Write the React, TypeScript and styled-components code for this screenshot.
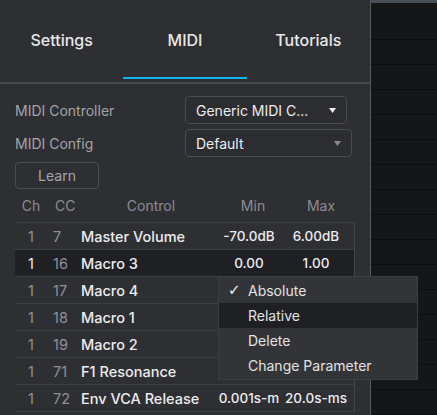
import React from "react";
import styled, { createGlobalStyle } from "styled-components";

const Global = createGlobalStyle`
  html, body { margin: 0; padding: 0; background: #2e2f33; }
  body { font-family: Inter, "Noto Sans", sans-serif; -webkit-font-smoothing: antialiased; }
  * { box-sizing: border-box; }
`;

const Shell = styled.div`
  position: relative;
  display: flex;
  width: 437px;
  height: 415px;
  overflow: hidden;
`;

const Panel = styled.div`
  width: 370px;
  flex: none;
  background: #2e2f33;
  display: flex;
  flex-direction: column;
`;

const Lane = styled.div`
  flex: 1;
  border-left: 1px solid #545a61;
  border-top: 3px solid #4a5057;
  background-color: #151618;
  background-image: repeating-linear-gradient(
    to bottom,
    transparent 0 24px,
    #0c0d0e 24px 25px
  );
  background-position: 0 12px;
`;

const TabBar = styled.div`
  display: grid;
  grid-template-columns: repeat(3, 1fr);
  height: 84px;
  border-bottom: 2px solid #48494d;
`;

const Tab = styled.div<{ $active?: boolean }>`
  position: relative;
  display: flex;
  align-items: center;
  justify-content: center;
  padding-bottom: 2px;
  font-size: 16px;
  font-weight: 500;
  color: #e8e8ea;
  &::after {
    content: "";
    display: ${(p) => (p.$active ? "block" : "none")};
    position: absolute;
    left: 0;
    right: 0;
    bottom: 3px;
    height: 2px;
    background: #12b5ef;
  }
`;

const Form = styled.div`
  display: grid;
  grid-template-columns: 170px auto;
  row-gap: 5px;
  padding: 12px 0 0 15px;
  align-items: center;
`;

const Label = styled.div`
  font-size: 14px;
  color: #a3a4a8;
`;

const Select = styled.div<{ $width: number; $dim?: boolean }>`
  width: ${(p) => p.$width}px;
  height: 28px;
  border: 1px solid #4b4c50;
  border-radius: 4px;
  background: #2c2d31;
  display: flex;
  align-items: center;
  justify-content: space-between;
  padding: 0 10px 0 10px;
  font-size: 14px;
  color: #ececee;
  svg { fill: ${(p) => (p.$dim ? "#8a8b8f" : "#f0f0f0")}; }
`;

const LearnButton = styled.div`
  width: 84px;
  height: 27px;
  border: 1px solid #4b4c50;
  border-radius: 4px;
  display: flex;
  align-items: center;
  justify-content: center;
  font-size: 14px;
  color: #a5a6aa;
`;

const cols = "32px 34px 140px 56px 78px";

const Head = styled.div`
  display: grid;
  grid-template-columns: ${cols};
  height: 33px;
  margin: 0 15px;
  align-items: center;
  font-size: 14px;
  color: #8b8d92;
`;

const HeadCell = styled.div<{ $align?: string; $shift?: number }>`
  text-align: ${(p) => p.$align || "center"};
  padding-left: ${(p) => p.$shift || 0}px;
  white-space: nowrap;
`;

const Table = styled.div`
  margin: 0 15px;
  border-top: 1px solid #3d3e42;
  border-right: 1px solid #45464a;
`;

const Row = styled.div<{ $selected?: boolean }>`
  display: grid;
  grid-template-columns: ${cols};
  height: 27px;
  align-items: center;
  border-bottom: 1px solid #3d3e42;
  background: ${(p) => (p.$selected ? "#1f2024" : "transparent")};
  font-size: 14.5px;
`;

const Num = styled.div<{ $bright?: boolean; $left?: boolean }>`
  color: ${(p) => (p.$bright ? "#ececee" : "#909297")};
  text-align: ${(p) => (p.$left ? "left" : "center")};
  padding-left: ${(p) => (p.$left ? "6px" : "0")};
`;

const Name = styled.div`
  color: #ececee;
  font-weight: 500;
  white-space: nowrap;
`;

const Value = styled.div`
  color: #ececee;
  font-weight: 500;
  font-size: 13.5px;
  display: flex;
  justify-content: center;
  white-space: nowrap;
`;

const Menu = styled.div`
  position: absolute;
  left: 218px;
  top: 276px;
  width: 200px;
  padding: 1px 0 1px;
  background: #333438;
  border: 1px solid #3c3d41;
`;

const Item = styled.div<{ $hover?: boolean }>`
  position: relative;
  height: 25px;
  display: flex;
  align-items: center;
  padding-left: 29px;
  font-size: 14px;
  color: #e2e2e4;
  background: ${(p) => (p.$hover ? "#1f2023" : "transparent")};
`;

const Check = styled.span`
  position: absolute;
  left: 9px;
  top: 3px;
  font-family: "DejaVu Sans", sans-serif;
  font-size: 15px;
  color: #f0f0f0;
`;

const Caret = () => (
  <svg width="7" height="5" viewBox="0 0 7 5">
    <path d="M0 0h7L3.5 5z" />
  </svg>
);

type Mapping = {
  ch: number;
  cc: number;
  name: string;
  min?: string;
  max?: string;
  selected?: boolean;
};

const rows: Mapping[] = [
  { ch: 1, cc: 7, name: "Master Volume", min: "-70.0dB", max: "6.00dB" },
  { ch: 1, cc: 16, name: "Macro 3", min: "0.00", max: "1.00", selected: true },
  { ch: 1, cc: 17, name: "Macro 4" },
  { ch: 1, cc: 18, name: "Macro 1" },
  { ch: 1, cc: 19, name: "Macro 2" },
  { ch: 1, cc: 71, name: "F1 Resonance" },
  { ch: 1, cc: 72, name: "Env VCA Release", min: "0.001s-m", max: "20.0s-ms" },
];

export default function App() {
  return (
    <Shell>
      <Global />
      <Panel>
        <TabBar>
          <Tab>Settings</Tab>
          <Tab $active>MIDI</Tab>
          <Tab>Tutorials</Tab>
        </TabBar>
        <Form>
          <Label>MIDI Controller</Label>
          <Select $width={162}>
            <span>Generic MIDI C...</span>
            <Caret />
          </Select>
          <Label>MIDI Config</Label>
          <Select $width={167} $dim>
            <span>Default</span>
            <Caret />
          </Select>
          <LearnButton>Learn</LearnButton>
        </Form>
        <Head>
          <HeadCell>Ch</HeadCell>
          <HeadCell $align="left" $shift={8}>CC</HeadCell>
          <HeadCell>Control</HeadCell>
          <HeadCell $shift={8}>Min</HeadCell>
          <HeadCell $shift={10}>Max</HeadCell>
        </Head>
        <Table>
          {rows.map((r) => (
            <Row key={r.cc} $selected={r.selected}>
              <Num $bright={r.selected}>{r.ch}</Num>
              <Num $left>{r.cc}</Num>
              <Name>{r.name}</Name>
              <Value>{r.min}</Value>
              <Value>{r.max}</Value>
            </Row>
          ))}
        </Table>
      </Panel>
      <Lane />
      <Menu>
        <Item>
          <Check>✓</Check>Absolute
        </Item>
        <Item $hover>Relative</Item>
        <Item>Delete</Item>
        <Item>Change Parameter</Item>
      </Menu>
    </Shell>
  );
}
